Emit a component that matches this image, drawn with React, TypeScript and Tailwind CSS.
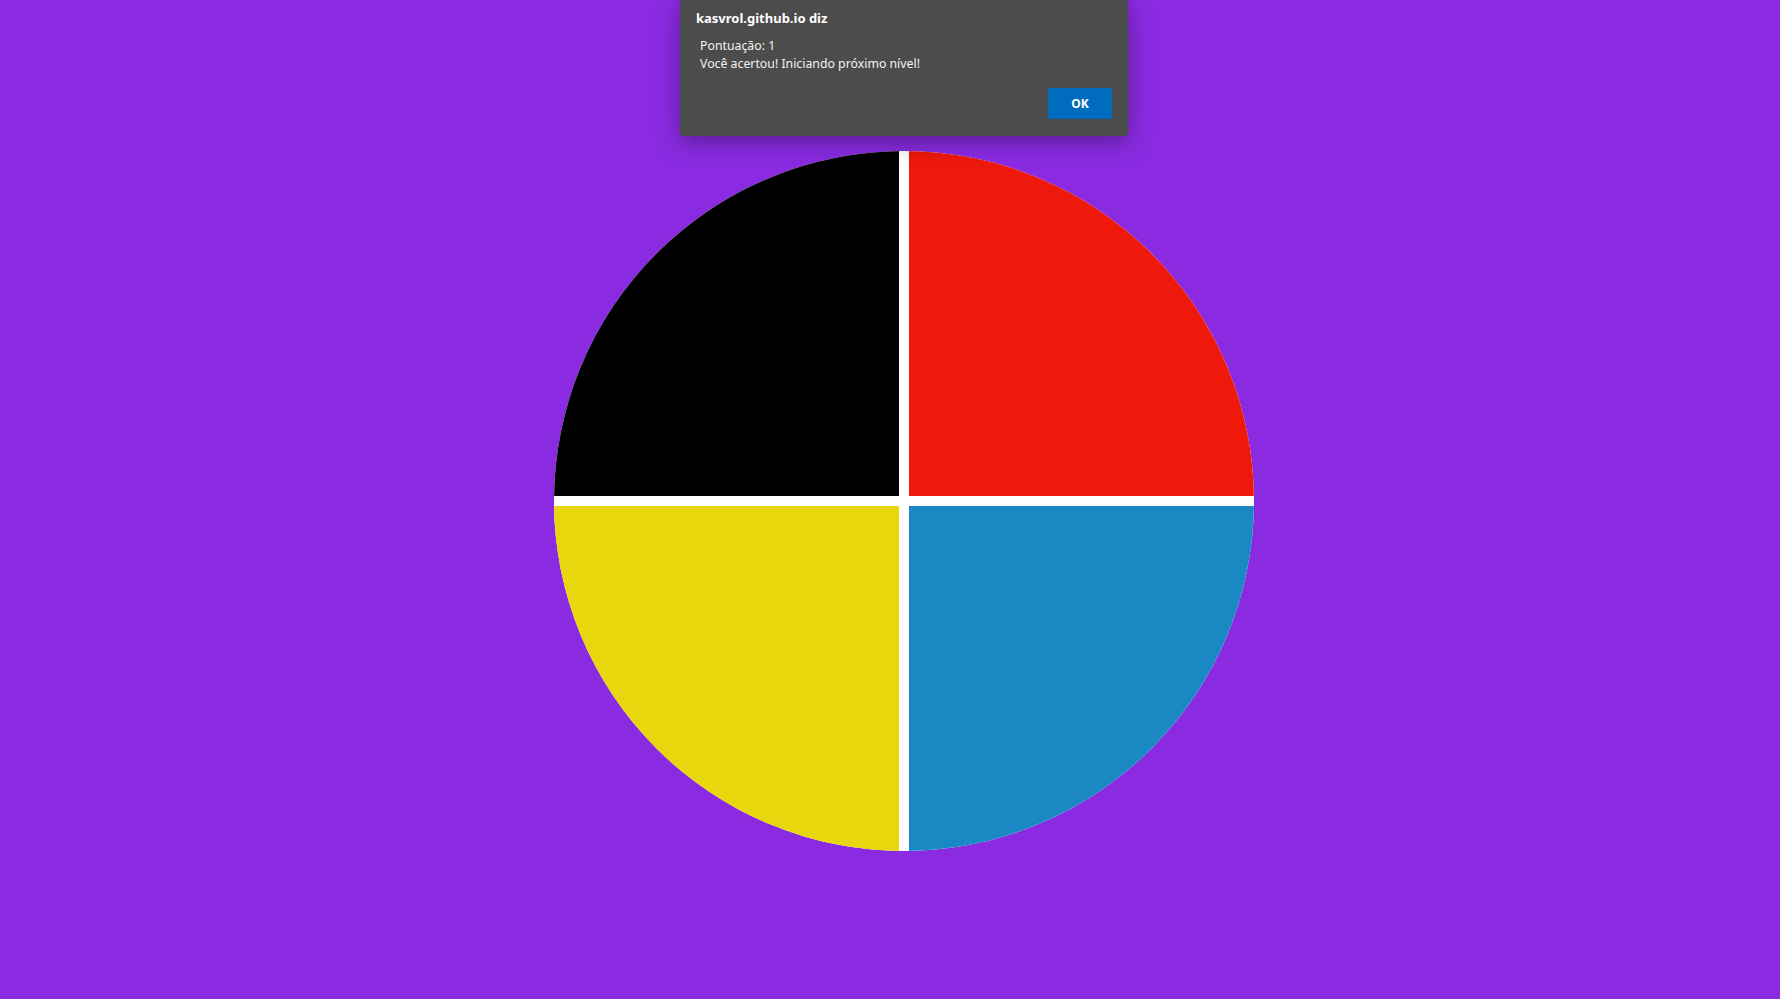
export default function App() {
  return (
    <div className="relative min-h-[999px] w-full bg-[#8a2be2] font-['Noto_Sans',sans-serif]">
      {/* Game board */}
      <div className="flex justify-center pl-[27px] pt-[151px]">
        <div className="grid h-[700px] w-[700px] grid-cols-2 gap-[10px] overflow-hidden rounded-full bg-white">
          <div className="bg-black" />
          <div className="bg-[#ef190b]" />
          <div className="bg-[#e8d70c]" />
          <div className="bg-[#1a88c3]" />
        </div>
      </div>

      {/* Alert dialog */}
      <div className="absolute left-[680px] top-0 h-[136px] w-[448px] rounded-b-[4px] bg-[#4c4c4c] shadow-[0_6px_24px_rgba(0,0,0,0.35)]">
        <div className="px-[16px] pt-[8px] text-[13px] font-bold leading-[20px] text-white">
          kasvrol.github.io diz
        </div>
        <div className="mt-[9px] px-[20px] text-[12.3px] leading-[18px] text-[#f2f2f2]">
          <p>Pontuação: 1</p>
          <p>Você acertou! Iniciando próximo nível!</p>
        </div>
        <div className="absolute bottom-[17px] right-[16px]">
          <button className="h-[31px] w-[64px] rounded-[2px] bg-[#006cbf] text-[12px] font-bold text-white">
            OK
          </button>
        </div>
      </div>
    </div>
  );
}
